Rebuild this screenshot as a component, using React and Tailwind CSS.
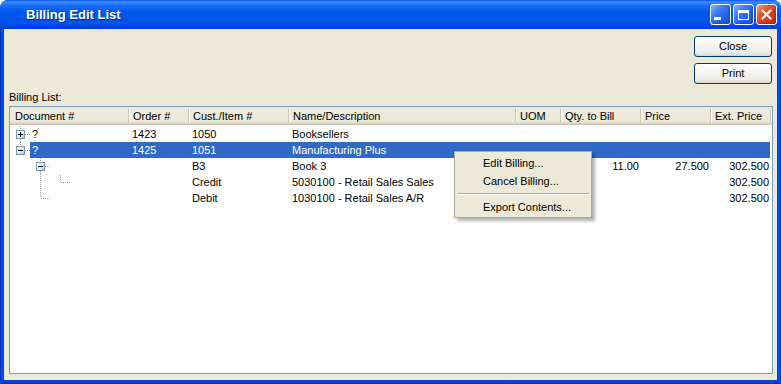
import React from "react";

const columns = [
  { key: "doc", label: "Document #", w: "w-[118px]" },
  { key: "order", label: "Order #", w: "w-[60px]" },
  { key: "cust", label: "Cust./Item #", w: "w-[100px]" },
  { key: "name", label: "Name/Description", w: "w-[227px]" },
  { key: "uom", label: "UOM", w: "w-[45px]" },
  { key: "qty", label: "Qty. to Bill", w: "w-[80px]", right: true },
  { key: "price", label: "Price", w: "w-[70px]", right: true },
  { key: "ext", label: "Ext. Price", w: "w-[60px]", right: true },
];

const rows = [
  { tree: "open1", doc: "?", order: "1423", cust: "1050", name: "Booksellers" },
  { tree: "open2", doc: "?", order: "1425", cust: "1051", name: "Manufacturing Plus", selected: true },
  { tree: "child", cust: "B3", name: "Book 3", qty: "11.00", price: "27.500", ext: "302.500" },
  { tree: "leaf1", cust: "Credit", name: "5030100 - Retail Sales Sales", ext: "302.500" },
  { tree: "leaf2", cust: "Debit", name: "1030100 - Retail Sales A/R", ext: "302.500" },
];

function Dots({ x1, y1, x2, y2 }) {
  return <line x1={x1} y1={y1} x2={x2} y2={y2} stroke="#A0A0A0" strokeWidth="1" strokeDasharray="1 1" />;
}

function Expander({ x, y, plus }) {
  return (
    <g>
      <rect x={x + 0.5} y={y + 0.5} width="8" height="8" fill="url(#exp)" stroke="#7898B5" />
      <line x1={x + 2} y1={y + 4.5} x2={x + 7} y2={y + 4.5} stroke="#000" />
      {plus && <line x1={x + 4.5} y1={y + 2} x2={x + 4.5} y2={y + 7} stroke="#000" />}
    </g>
  );
}

function Tree({ kind }) {
  const wide = kind === "open1" || kind === "open2" ? 20 : 70;
  return (
    <svg width={wide} height="16" shapeRendering="crispEdges" className="shrink-0">
      <defs>
        <linearGradient id="exp" x1="0" y1="0" x2="1" y2="1">
          <stop offset="0" stopColor="#FFFFFF" />
          <stop offset="0.6" stopColor="#E8E5DC" />
          <stop offset="1" stopColor="#C4BBA6" />
        </linearGradient>
      </defs>
      {kind === "open1" && (
        <>
          <Dots x1={10.5} y1={0} x2={10.5} y2={4} />
          <Dots x1={10.5} y1={13} x2={10.5} y2={16} />
          <Dots x1={15} y1={8.5} x2={20} y2={8.5} />
          <Expander x={6} y={4} plus />
        </>
      )}
      {kind === "open2" && (
        <>
          <Dots x1={10.5} y1={0} x2={10.5} y2={4} />
          <Dots x1={15} y1={8.5} x2={20} y2={8.5} />
          <Expander x={6} y={4} />
        </>
      )}
      {kind === "child" && (
        <>
          <Dots x1={30.5} y1={0} x2={30.5} y2={4} />
          <Dots x1={30.5} y1={13} x2={30.5} y2={16} />
          <Dots x1={35} y1={8.5} x2={40} y2={8.5} />
          <Expander x={26} y={4} />
        </>
      )}
      {kind === "leaf1" && (
        <>
          <Dots x1={30.5} y1={0} x2={30.5} y2={16} />
          <Dots x1={50.5} y1={1} x2={50.5} y2={8} />
          <Dots x1={51} y1={8.5} x2={60} y2={8.5} />
        </>
      )}
      {kind === "leaf2" && (
        <>
          <Dots x1={30.5} y1={0} x2={30.5} y2={8} />
          <Dots x1={31} y1={8.5} x2={40} y2={8.5} />
        </>
      )}
    </svg>
  );
}

function TitleButton({ kind }) {
  const base =
    "w-[21px] h-[21px] rounded-[3px] border border-white flex items-center justify-center shadow-[inset_-1px_-1px_2px_rgba(0,0,0,0.25)]";
  if (kind === "close") {
    return (
      <div className={`${base} bg-[linear-gradient(135deg,#F0A58C_0%,#E2572F_35%,#D43A14_70%,#C2300F_100%)]`}>
        <svg width="11" height="11" viewBox="0 0 11 11">
          <path d="M1.5 1.5 L9.5 9.5 M9.5 1.5 L1.5 9.5" stroke="#fff" strokeWidth="2" strokeLinecap="square" />
        </svg>
      </div>
    );
  }
  return (
    <div className={`${base} bg-[linear-gradient(135deg,#8CB4FF_0%,#3C7CF5_35%,#1F5FE6_70%,#1A54D6_100%)]`}>
      {kind === "min" ? (
        <div className="w-[7px] h-[3px] bg-white self-end mb-[4px] mr-[6px]" />
      ) : (
        <div className="w-[11px] h-[10px] border border-white border-t-[3px]" />
      )}
    </div>
  );
}

function XpButton({ children }) {
  return (
    <div className="w-[78px] h-[21px] rounded-[3px] border border-[#003C74] bg-[linear-gradient(to_bottom,#FFFFFF_0%,#F4F3EE_50%,#ECEBE6_85%,#D6D0C5_100%)] flex items-center justify-center text-black">
      {children}
    </div>
  );
}

export default function App() {
  return (
    <div className="w-[781px] h-[384px] flex flex-col rounded-t-[8px] overflow-hidden bg-[#0055EA] font-['Liberation_Sans',Arial,sans-serif] text-[11px] text-black">
      {/* Title bar */}
      <div className="h-[29px] shrink-0 flex items-center pl-[26px] pr-[4px] bg-[linear-gradient(to_bottom,#0A5AF0_0%,#3D8EFF_7%,#1C6FFA_18%,#0058EE_40%,#0055E8_75%,#0049DA_90%,#003DC4_100%)]">
        <div className="flex-1 text-white font-bold text-[13px] [text-shadow:1px_1px_#0A2A8F] pt-[1px]">
          Billing Edit List
        </div>
        <div className="flex gap-[2px] items-center">
          <TitleButton kind="min" />
          <TitleButton kind="max" />
          <TitleButton kind="close" />
        </div>
      </div>

      <div className="flex-1 flex min-h-0">
        <div className="w-[4px] bg-[linear-gradient(to_right,#0019A8,#0055EA_35%,#0050E0_70%,#0835C9)]" />

        {/* Window body */}
        <div className="flex-1 relative bg-[#ECE9D8] flex flex-col pl-[5px] pr-[4px] pt-[7px] pb-[6px]">
          <div className="flex flex-col items-end gap-[6px] pr-[1px]">
            <XpButton>Close</XpButton>
            <XpButton>Print</XpButton>
          </div>
          <div className="h-[22px] pt-[7px] leading-[13px]">Billing List:</div>

          {/* List */}
          <div className="flex-1 border border-[#7F9DB9] bg-white flex flex-col">
            <div className="h-[18px] flex bg-[#EBEADB] shadow-[inset_0_-1px_#CBC7B8,inset_0_-2px_#D6D2C2,inset_0_-3px_#E2DECD]">
              {columns.map((c) => (
                <div key={c.key} className={`${c.w} shrink-0 flex items-center justify-between pl-[5px]`}>
                  <span className="whitespace-nowrap">{c.label}</span>
                  <span className="flex h-[13px] mb-[2px] translate-x-[2px]">
                    <span className="w-[1px] bg-[#C7C5B2]" />
                    <span className="w-[1px] bg-white" />
                  </span>
                </div>
              ))}
            </div>
            <div className="pt-[1px] flex flex-col">
              {rows.map((r, i) => {
                const sel = r.selected ? "bg-[#316AC5] text-white" : "";
                return (
                  <div key={i} className="h-[16px] flex leading-[16px]">
                    <div className="w-[118px] shrink-0 flex">
                      <Tree kind={r.tree} />
                      <div className={`flex-1 pl-[2px] ${sel}`}>{r.doc}</div>
                    </div>
                    {columns.slice(1).map((c) => (
                      <div
                        key={c.key}
                        className={`${c.w} shrink-0 whitespace-nowrap ${c.right ? "text-right pr-[1px]" : "pl-[4px]"} ${sel}`}
                      >
                        {r[c.key]}
                      </div>
                    ))}
                  </div>
                );
              })}
            </div>
          </div>

          {/* Context menu */}
          <div className="absolute left-[450px] top-[122px] w-[138px] bg-[#ECE9D8] border border-[#ACA899] pt-[2px] pb-[1px] shadow-[3px_3px_3px_rgba(0,0,0,0.3)]">
            <div className="h-[18px] leading-[18px] pl-[28px]">Edit Billing...</div>
            <div className="h-[18px] leading-[18px] pl-[28px]">Cancel Billing...</div>
            <div className="mx-[2px] my-[3px] border-t border-[#ACA899] border-b border-b-white" />
            <div className="h-[18px] leading-[18px] pl-[28px]">Export Contents...</div>
          </div>
        </div>

        <div className="w-[4px] bg-[linear-gradient(to_right,#0835C9,#0050E0_30%,#0055EA_65%,#0019A8)]" />
      </div>
      <div className="h-[4px] shrink-0 bg-[linear-gradient(to_bottom,#0835C9,#0050E0_35%,#0040C8_70%,#00149A)]" />
    </div>
  );
}
